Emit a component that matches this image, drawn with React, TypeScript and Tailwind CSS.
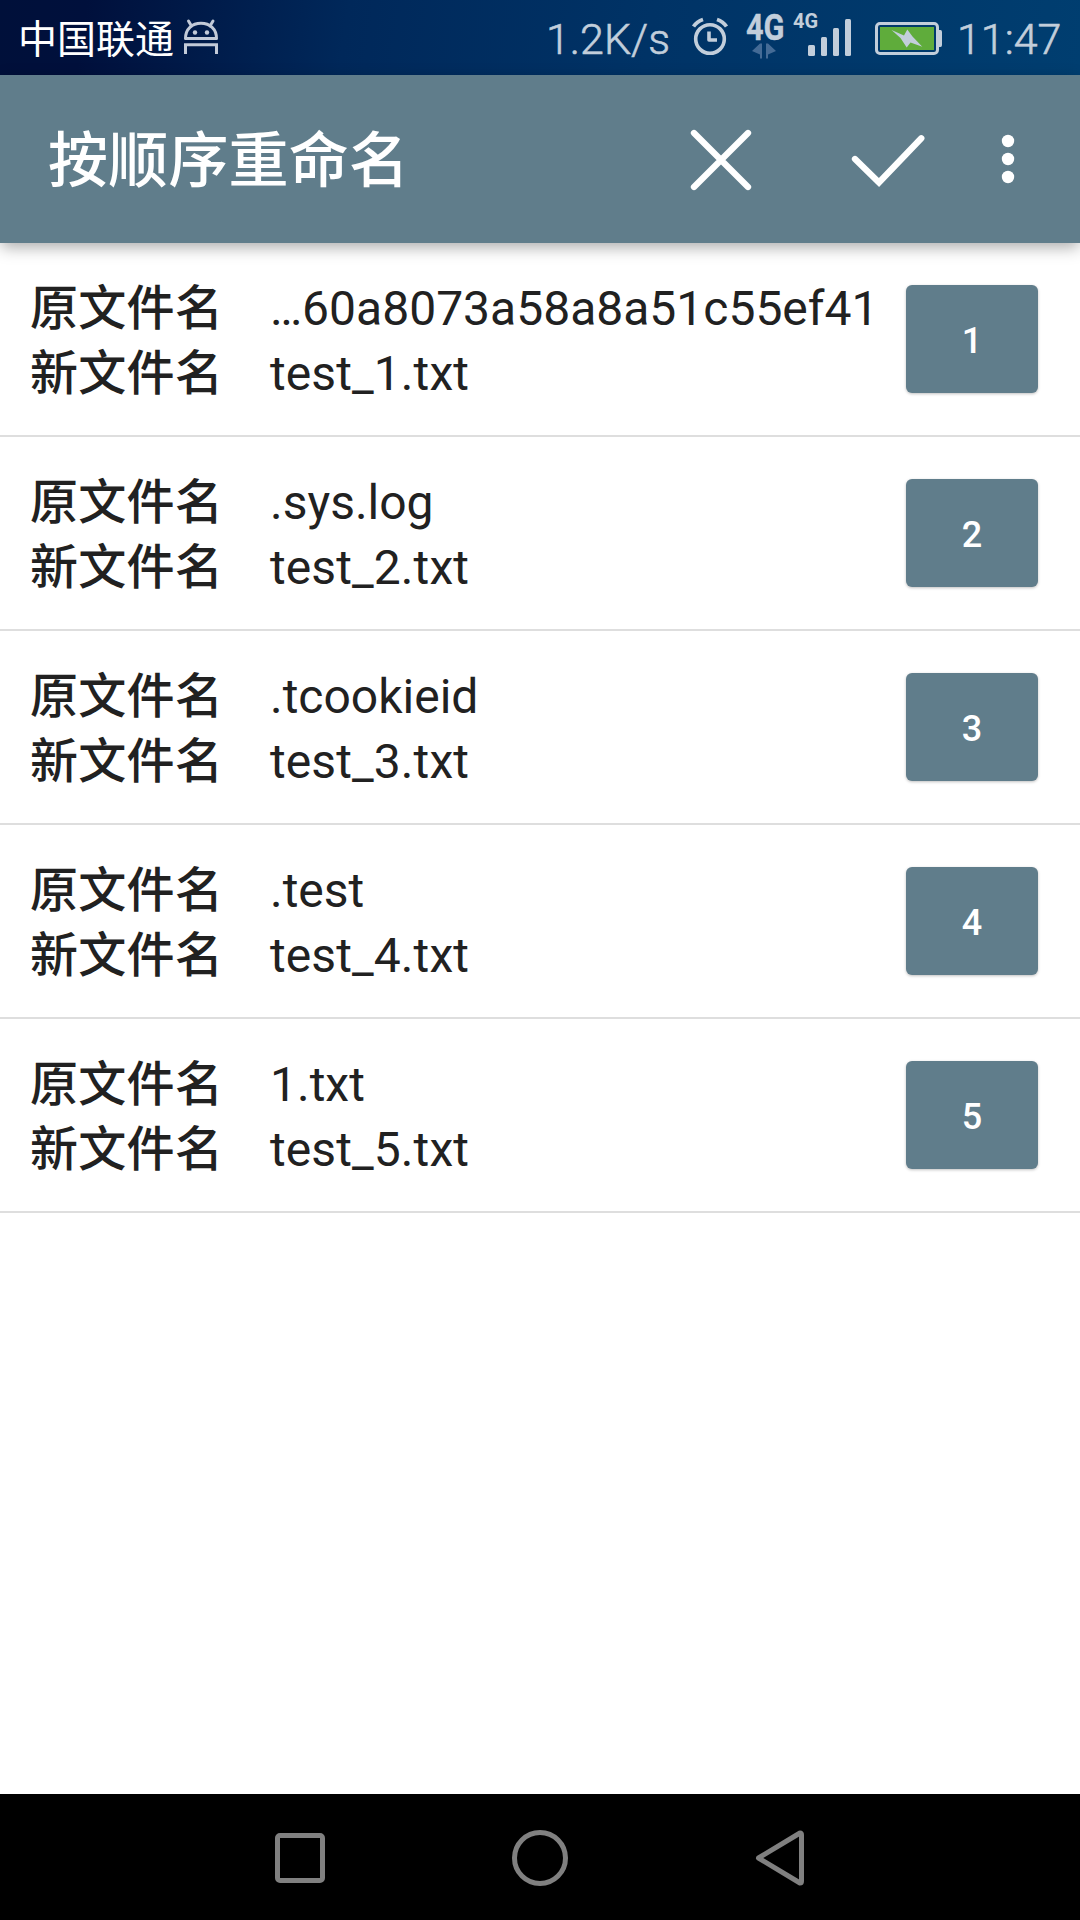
const cjk = "font-['Roboto','Noto_Sans_CJK_SC',sans-serif]";

const files = [
  { from: "…60a8073a58a8a51c55ef41", to: "test_1.txt" },
  { from: ".sys.log", to: "test_2.txt" },
  { from: ".tcookieid", to: "test_3.txt" },
  { from: ".test", to: "test_4.txt" },
  { from: "1.txt", to: "test_5.txt" },
];

function StatusBar() {
  return (
    <div className="flex h-[75px] items-center bg-[linear-gradient(98deg,#00103a_0%,#00103c_8%,#00285a_32%,#003366_60%,#003e70_100%)] pl-[18px] text-[#c2cedb]">
      <span className="w-[156px] pt-[6px] text-[39px] leading-[69px] whitespace-nowrap text-white">
        中国联通
      </span>
      <svg className="ml-[9px] h-[75px] w-[36px] shrink-0" viewBox="183 0 36 75" fill="none">
        <path
          d="M185.5 38.5C185.5 29 192 23.3 201 23.3S216.500 29 216.500 38.500Z"
          stroke="#c2cad8"
          strokeWidth="3"
          strokeLinejoin="round"
        />
        <path d="M188.500 21l3 5M213 21l-3 5" stroke="#c2cad8" strokeWidth="3" strokeLinecap="round" />
        <circle cx="195" cy="32.500" r="2.200" fill="#c2cad8" />
        <circle cx="207" cy="32.500" r="2.200" fill="#c2cad8" />
        <path d="M185.500 54V44.700H216.500V54" stroke="#c2cad8" strokeWidth="3" />
      </svg>
      <div className="ml-auto flex h-[75px] items-center">
        <span className="pt-[3px] text-[43px] leading-[72px] font-light [-webkit-text-stroke:0.6px]">1.2K/s</span>
        <svg className="ml-[21px] h-[75px] w-[38px]" viewBox="691 0 38 75" fill="none" stroke="#c2cedb">
          <circle cx="710" cy="39" r="14.300" strokeWidth="3.600" />
          <path d="M693.500 26.500Q697 21.500 703 19.500M726.500 26.500Q723 21.500 717 19.500" strokeWidth="3.800" />
          <path d="M709 31.500V40H717" strokeWidth="3.600" strokeLinejoin="round" />
        </svg>
        <div className="ml-[17px] flex h-[75px] w-[38px] flex-col pt-[10px]">
          <span className="h-[33px] origin-left scale-x-[.83] text-[37px] leading-[35px] font-bold [-webkit-text-stroke:0.4px]">
            4G
          </span>
          <svg className="h-[16px] w-[38px]" viewBox="746 43 38 16" fill="#446b96">
            <path d="M752 51l8-7.500h2v15h-2v-4zM776 51l-8-7.500h-2v15h2v-4z" />
          </svg>
        </div>
        <div className="ml-[9px] h-[75px] w-[15px] pt-[10px]">
          <span className="block text-[20px] leading-[22px] font-bold">4G</span>
        </div>
        <svg className="h-[75px] w-[44px]" viewBox="808 0 44 75" fill="#c2cedb">
          <rect x="808" y="45" width="7" height="11" rx="1.500" />
          <rect x="821" y="37" width="6" height="19" rx="1.500" />
          <rect x="833" y="28" width="6" height="28" rx="1.500" />
          <rect x="845" y="19" width="6" height="37" rx="1.500" />
        </svg>
        <svg className="ml-[22px] h-[75px] w-[69px]" viewBox="874 0 69 75" fill="none">
          <rect x="876.500" y="23.500" width="61" height="30" rx="3.500" stroke="#c2cedb" strokeWidth="3" />
          <rect x="880" y="27" width="54" height="23" fill="#5fac3b" />
          <path d="M939 30h1.500q1.500 0 1.500 2v13q0 2-1.500 2H939z" fill="#c2cedb" />
          <path d="M891.500 30L904 35.500L907.300 29.500L912.500 36.500L922.300 46.800L910.500 42.500L906.700 47.500L900.500 38Z" fill="#c2cedb" />
        </svg>
        <span className="w-[137px] pt-[3px] pl-[14px] text-[43px] leading-[72px] font-light [-webkit-text-stroke:0.6px]">
          11:47
        </span>
      </div>
    </div>
  );
}

function AppBar() {
  return (
    <header className="relative flex h-[168px] items-center bg-[#607d8b] pl-[48px] text-white shadow-[0_5px_15px_-1px_rgba(0,0,0,0.34)]">
      <h1 className="flex-1 pt-[5px] text-[60px] leading-[84px] font-medium tracking-[0.2px]">按顺序重命名</h1>
      <svg className="h-[168px] w-[420px]" viewBox="660 75 420 168" fill="none">
        <path d="M694 133L748 187M748 133L694 187" stroke="#fff" strokeWidth="6.300" strokeLinecap="round" />
        <path d="M855 159L879 182.500L921.300 138.300" stroke="#fff" strokeWidth="6.300" strokeLinecap="round" />
        <circle cx="1008" cy="141" r="6.200" fill="#fff" />
        <circle cx="1008" cy="159" r="6.200" fill="#fff" />
        <circle cx="1008" cy="177" r="6.200" fill="#fff" />
      </svg>
    </header>
  );
}

function FileRow({ from, to, index }: { from: string; to: string; index: number }) {
  return (
    <li className="flex h-[194px] items-center border-b-2 border-[#dedede] pr-[42px] pl-[30px]">
      <dl className="grid flex-1 grid-cols-[240px_1fr] pt-[4px] text-[48px] leading-[65px] text-[#212121]">
        <dt className="font-medium tracking-[0.3px]">原文件名</dt>
        <dd>{from}</dd>
        <dt className="font-medium tracking-[0.3px]">新文件名</dt>
        <dd className="tracking-[0.1px]">{to}</dd>
      </dl>
      <button className="h-[108px] w-[132px] rounded-[6px] bg-[#607d8b] pt-[3px] text-[36px] font-medium text-white shadow-[0_1px_3px_rgba(0,0,0,0.25)]">
        {index}
      </button>
    </li>
  );
}

function NavBar() {
  return (
    <nav className="flex h-[126px] items-center justify-center bg-black">
      <svg className="h-[126px] w-[240px]" viewBox="180 1794 240 126" fill="none">
        <rect x="277.500" y="1835.500" width="45" height="45" rx="2.500" stroke="#808080" strokeWidth="5" />
      </svg>
      <svg className="h-[126px] w-[240px]" viewBox="420 1794 240 126" fill="none">
        <circle cx="540" cy="1858" r="25.500" stroke="#808080" strokeWidth="5" />
      </svg>
      <svg className="h-[126px] w-[240px]" viewBox="660 1794 240 126" fill="none">
        <path d="M758.500 1858L800 1833Q801.500 1833 801.500 1835V1881Q801.500 1883 800 1883Z" stroke="#808080" strokeWidth="5" strokeLinejoin="round" />
      </svg>
    </nav>
  );
}

export default function App() {
  return (
    <div className={`flex h-[1920px] w-[1080px] flex-col overflow-hidden bg-white ${cjk}`} lang="zh-CN">
      <StatusBar />
      <AppBar />
      <ul className="flex-1">
        {files.map((file, i) => (
          <FileRow key={file.to} from={file.from} to={file.to} index={i + 1} />
        ))}
      </ul>
      <NavBar />
    </div>
  );
}
